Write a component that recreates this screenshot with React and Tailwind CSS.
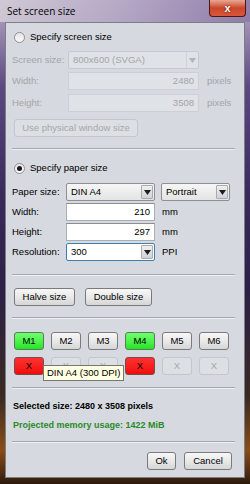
import React from "react";

const F = "font-['Liberation_Sans',Arial,sans-serif]";

function Radio({ checked, label }) {
  return (
    <div className="flex items-center h-[14px] ml-[8px]">
      <div className="w-[11px] h-[11px] rounded-full border border-[#8e8f8f] bg-gradient-to-b from-[#e6e6e6] to-[#fafafa] flex items-center justify-center">
        {checked && <div className="w-[5px] h-[5px] rounded-full bg-[#1a1a1a]" />}
      </div>
      <span className="ml-[5px] text-[9.5px] text-black">{label}</span>
    </div>
  );
}

function Sep({ mt }) {
  return <div className={`${mt} ml-[6px] w-[223px] h-[2px] border-t border-[#a4a8ae] border-b border-b-[#eef0f3]`} />;
}

function Arrow({ disabled }) {
  return (
    <svg width="7" height="5" viewBox="0 0 7 5">
      <path d="M0 0 L7 0 L3.5 5 Z" fill={disabled ? "#b0b3b8" : "#1e1e1e"} />
    </svg>
  );
}

function Combo({ w, text, focus }) {
  return (
    <div
      className={`${w} h-[18px] rounded-[2px] border ${focus ? "border-[#3c7fb1] bg-white" : "border-[#8e8f8f] bg-gradient-to-b from-[#f6f6f6] to-[#e4e4e4]"} flex items-stretch`}
    >
      <span className="flex-1 pl-[4px] text-[9.5px] leading-[16px] text-black">{text}</span>
      <div className="w-[12px] my-[1px] mr-[1px] rounded-[1px] border border-[#a9abae] bg-gradient-to-b from-[#f0f0f0] to-[#cfd3d8] flex items-center justify-center">
        <Arrow />
      </div>
    </div>
  );
}

function Field({ w, value, disabled }) {
  return (
    <div
      className={`${w} h-[18px] border ${disabled ? "border-[#ccd0d5] bg-[#dfe2e6] text-[#a3a5a8]" : "border-[#abadb3] border-t-[#8a8d94] bg-white text-black"} text-right pr-[4px] text-[9.5px] leading-[16px]`}
    >
      {value}
    </div>
  );
}

function Btn({ w, children, variant = "normal" }) {
  const v =
    variant === "green"
      ? "bg-gradient-to-b from-[#6dff6d] to-[#1fe61f] border-[#5a7a5a] text-black"
      : variant === "red"
      ? "bg-gradient-to-b from-[#ff3030] to-[#f00a0a] border-[#7a4a4a] text-black"
      : variant === "disabled"
      ? "bg-[#dcdfe3] border-[#c3c7cc] text-[#a6a8ab]"
      : "bg-gradient-to-b from-[#f7f7f7] via-[#e9e9e9] to-[#d6d6d6] border-[#7a7a7a] text-black";
  return (
    <div className={`${w} h-[18px] rounded-[3px] border ${v} flex items-center justify-center text-[9.5px]`}>
      {children}
    </div>
  );
}

export default function App() {
  return (
    <div
      className={`${F} w-[250px] h-[484px] overflow-hidden relative bg-[linear-gradient(180deg,#c6bdd0_0%,#a595b8_4%,#5b4882_18%,#3a2a5c_40%,#2c2046_60%,#3a2a22_82%,#8a4d16_93%,#4a2a10_98%,#2a1a0a_100%)]`}
    >
      {/* title bar */}
      <div className="h-[22px] flex items-start relative">
        <div className="absolute inset-x-0 top-0 h-[22px] bg-gradient-to-r from-[#d2cbd6] via-[#b3a6c4] to-[#8d7aa8] opacity-90" />
        <span className="relative ml-[7px] mt-[4px] text-[10px] text-black font-['Open_Sans',sans-serif] leading-[14px]">
          Set screen size
        </span>
        <div className="absolute left-[209px] top-0 w-[37px] h-[17px] rounded-b-[4px] border border-t-0 border-[#4a1810] bg-gradient-to-b from-[#e9a692] via-[#c9462c] to-[#d8583a] flex items-center justify-center">
          <span className="text-white text-[11px] font-bold leading-none [text-shadow:0_0_2px_#400]">x</span>
        </div>
      </div>

      {/* content panel */}
      <div className="ml-[5px] w-[240px] h-[456px] border border-[#7d7f86] bg-[#d6d9df] relative">
        <div className="pl-[6px] flex flex-col">
          <div className="mt-[7px] -ml-[6px]">
            <Radio label="Specify screen size" />
          </div>

          <div className="mt-[7px] flex items-center h-[18px]">
            <span className="w-[56px] text-[9.5px] text-[#a3a5a8]">Screen size:</span>
            <div className="w-[131px] h-[18px] rounded-[2px] border border-[#c6cad0] bg-[#dfe2e6] flex items-stretch">
              <span className="flex-1 pl-[4px] text-[9.5px] leading-[16px] text-[#a3a5a8]">800x600 (SVGA)</span>
              <div className="w-[12px] border-l border-[#cfd3d8] flex items-center justify-center">
                <Arrow disabled />
              </div>
            </div>
          </div>

          <div className="mt-[3px] flex items-center h-[18px]">
            <span className="w-[56px] text-[9.5px] text-[#a3a5a8]">Width:</span>
            <Field w="w-[131px]" value="2480" disabled />
            <span className="ml-[8px] text-[9.5px] text-[#a3a5a8]">pixels</span>
          </div>

          <div className="mt-[4px] flex items-center h-[18px]">
            <span className="w-[56px] text-[9.5px] text-[#a3a5a8]">Height:</span>
            <Field w="w-[131px]" value="3508" disabled />
            <span className="ml-[8px] text-[9.5px] text-[#a3a5a8]">pixels</span>
          </div>

          <div className="mt-[7px] ml-[2px]">
            <Btn w="w-[124px]" variant="disabled">Use physical window size</Btn>
          </div>
        </div>

        <Sep mt="mt-[11px]" />

        <div className="pl-[6px] flex flex-col">
          <div className="mt-[11px] -ml-[6px]">
            <Radio checked label="Specify paper size" />
          </div>

          <div className="mt-[8px] flex items-center h-[18px]">
            <span className="w-[54px] text-[9.5px] text-black">Paper size:</span>
            <Combo w="w-[89px]" text="DIN A4" />
            <div className="ml-[6px]">
              <Combo w="w-[69px]" text="Portrait" />
            </div>
          </div>

          <div className="mt-[2px] flex items-center h-[18px]">
            <span className="w-[54px] text-[9.5px] text-black">Width:</span>
            <Field w="w-[89px]" value="210" />
            <span className="ml-[7px] text-[9.5px] text-black">mm</span>
          </div>

          <div className="mt-[2px] flex items-center h-[18px]">
            <span className="w-[54px] text-[9.5px] text-black">Height:</span>
            <Field w="w-[89px]" value="297" />
            <span className="ml-[7px] text-[9.5px] text-black">mm</span>
          </div>

          <div className="mt-[2px] flex items-center h-[18px]">
            <span className="w-[54px] text-[9.5px] text-black">Resolution:</span>
            <Combo w="w-[89px]" text="300" focus />
            <span className="ml-[7px] text-[9.5px] text-black">PPI</span>
          </div>
        </div>

        <Sep mt="mt-[13px]" />

        <div className="mt-[12px] ml-[8px] flex gap-[10px]">
          <Btn w="w-[61px]">Halve size</Btn>
          <Btn w="w-[67px]">Double size</Btn>
        </div>

        <Sep mt="mt-[11px]" />

        <div className="mt-[13px] ml-[8px] flex gap-[7px]">
          <Btn w="w-[30px]" variant="green">M1</Btn>
          <Btn w="w-[30px]">M2</Btn>
          <Btn w="w-[30px]">M3</Btn>
          <Btn w="w-[30px]" variant="green">M4</Btn>
          <Btn w="w-[30px]">M5</Btn>
          <Btn w="w-[30px]">M6</Btn>
        </div>

        <div className="mt-[7px] ml-[8px] flex gap-[7px]">
          <Btn w="w-[30px]" variant="red">X</Btn>
          <Btn w="w-[30px]" variant="disabled">X</Btn>
          <Btn w="w-[30px]" variant="disabled">X</Btn>
          <Btn w="w-[30px]" variant="red">X</Btn>
          <Btn w="w-[30px]" variant="disabled">X</Btn>
          <Btn w="w-[30px]" variant="disabled">X</Btn>
        </div>

        <Sep mt="mt-[12px]" />

        <div className="mt-[10px] ml-[7px] h-[14px] text-[9px] font-bold text-black leading-[14px]">
          Selected size: 2480 x 3508 pixels
        </div>
        <div className="mt-[5px] ml-[7px] h-[14px] text-[9px] font-bold text-[#2a8a2a] leading-[14px]">
          Projected memory usage: 1422 MiB
        </div>

        <Sep mt="mt-[9px]" />

        <div className="mt-[9px] flex justify-end gap-[8px] mr-[12px]">
          <Btn w="w-[29px]">Ok</Btn>
          <Btn w="w-[48px]">Cancel</Btn>
        </div>

        {/* tooltip */}
        <div className="absolute left-[37px] top-[342px] h-[16px] px-[3px] border border-[#767676] bg-[#ffffe1] text-[9.5px] leading-[14px] text-black whitespace-nowrap">
          DIN A4 (300 DPI)
        </div>
      </div>
    </div>
  );
}
